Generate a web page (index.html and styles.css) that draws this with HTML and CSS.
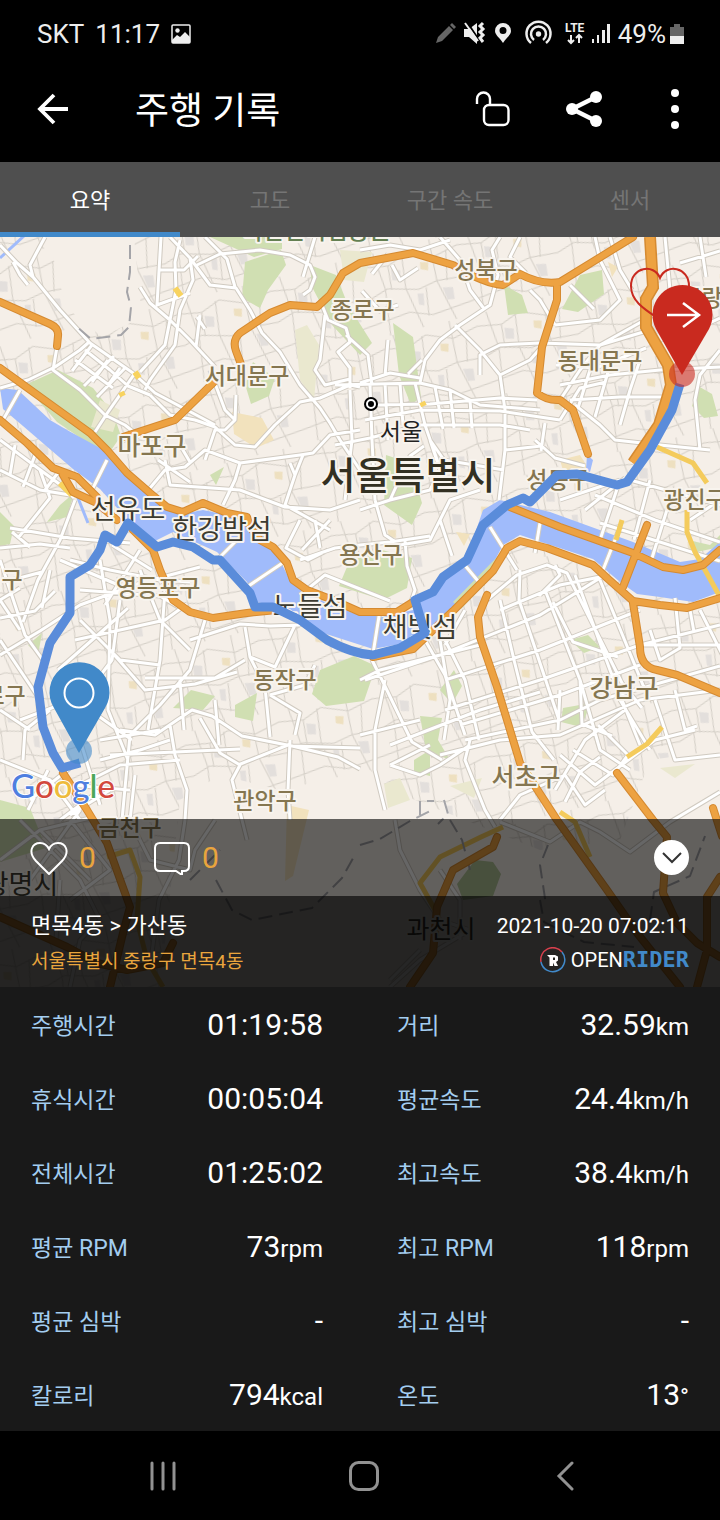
FILE: index.html
```html
<!DOCTYPE html>
<html lang="ko">
  <head>
    <meta charset="UTF-8">
    <meta name="viewport" content="width=device-width, initial-scale=1.0">
    <title>주행 기록</title>
    <link rel="stylesheet" href="styles.css">
  </head>
  <body>
    <div class="status">
      <span>SKT</span>
      <span>11:17</span>
      <svg class="status__photo" width="20" height="20" viewBox="0 0 20 20" aria-hidden="true">
        <rect x="1" y="1" width="18" height="18" rx="1" fill="none" stroke="#eee" stroke-width="1.5"/>
        <circle cx="6.500" cy="6.500" r="2.200" fill="#eee"/>
        <path d="M1 16l5-5 3 2 5-5 5 5v6H1z" fill="#eee"/>
      </svg>
      <div class="status__side">
        <svg width="176" height="32" viewBox="434 18 176 32" aria-hidden="true">
          <path d="M435 43l2-6 11-11 4 4-11 11zM449 25l2-2 4 4-2 2z" fill="#666"/>
          <g fill="#eee">
            <path d="M463 29h5l8-6v21l-8-7h-5z"/>
            <path d="M466 22l12 18" stroke="#000" stroke-width="2"/>
            <path d="M464 23l13 18" stroke="#eee" stroke-width="2"/>
            <path d="M482 23l-3 3 3 3-3 3 3 3-3 3 3 4" fill="none" stroke="#eee" stroke-width="3"/>
            <path fill-rule="evenodd" d="M502 43c-3-5-8-8-8-12a8 8 0 0 1 16 0c0 4-5 7-8 12zM502 27a3.500 3.500 0 1 0 0 7 3.500 3.500 0 0 0 0-7z"/>
            <circle cx="537.500" cy="34" r="2.700"/>
            <path d="M530 43a12 12 0 1 1 15 0M533 40a7.500 7.500 0 1 1 9 0" fill="none" stroke="#eee" stroke-width="2.500"/>
            <path d="M570 35v8M567 40l3 3 3-3M578 43v-8M575 38l3-3 3 3" fill="none" stroke="#eee" stroke-width="2"/>
            <path d="M591 39h2v4h-2zM596 35h2v8h-2zM601 30h3v13h-3zM606 24h3v19h-3z"/>
          </g>
          <text class="status__lte" x="564" y="32">LTE</text>
        </svg>
        <span class="status__battery">49%</span>
        <svg width="14" height="20" viewBox="0 0 14 20" aria-hidden="true">
          <path d="M0 12V3h4V0h6v3h4v9z" fill="#666"/>
          <path d="M0 12h14v8H0z" fill="#eee"/>
        </svg>
      </div>
    </div>

    <header class="toolbar">
      <button class="toolbar__back" type="button" aria-label="뒤로">
        <svg width="32" height="32" viewBox="0 0 32 32"><path d="M31 16H3M17 2L3 16l14 14" stroke-width="3.800"/></svg>
      </button>
      <h1 class="toolbar__title">주행 기록</h1>
      <button class="toolbar__action" type="button" aria-label="잠금 해제">
        <svg width="36" height="36" viewBox="0 0 36 36">
          <rect x="9" y="14" width="24.500" height="20" rx="5" stroke-width="2.400"/>
          <path d="M2 13V8a6.500 6.500 0 0 1 13 0v6" stroke-width="2.400"/>
        </svg>
      </button>
      <button class="toolbar__action" type="button" aria-label="공유">
        <svg width="36" height="36" viewBox="0 0 36 36">
          <path d="M30 6L6 18l24 12" stroke-width="4.500"/>
          <g fill="#fff" stroke="none"><circle cx="30" cy="6" r="6"/><circle cx="6" cy="18" r="6"/><circle cx="30" cy="30" r="6"/></g>
        </svg>
      </button>
      <button class="toolbar__action" type="button" aria-label="더보기">
        <svg width="8" height="40" viewBox="0 0 8 40"><g fill="#fff" stroke="none"><circle cx="4" cy="4" r="4"/><circle cx="4" cy="20" r="4"/><circle cx="4" cy="36" r="4"/></g></svg>
      </button>
    </header>

    <nav class="tabs" aria-label="기록 보기">
      <button class="tabs__tab tabs__tab--active" type="button">요약</button>
      <button class="tabs__tab" type="button">고도</button>
      <button class="tabs__tab" type="button">구간 속도</button>
      <button class="tabs__tab" type="button">센서</button>
    </nav>

    <main>
      <section class="ride" aria-label="주행 경로">
        <svg class="map" viewBox="0 237 720 750" role="img" aria-label="서울 지도">
          <defs>
            <pattern id="streets" width="96" height="84" patternUnits="userSpaceOnUse" patternTransform="rotate(-14)">
              <path class="map__street" d="M0 12l24 4 20-8 26 10 26-6M0 44l18-6 30 8 20-4 28 2M0 70l34-4 22 8 40-4M12 0l4 38-6 46M40 8l-4 34 8 42M70 0l-2 42 10 42M84 14l-6 30M24 16l-2 24M56 46l-4 28"/>
              <path fill="#e3dfdc" d="M26 20l9 3-2 10-8-2zM72 50l10 2-1 12-7-1zM46 50l6 1-2 12-5-2z"/>
              <path fill="#eee0c0" d="M56 20l8 2-2 8-7-3z"/>
            </pattern>
            <path id="roads" d="M0 245l17 18 16 14 27 33 30 33 43 30 22 20 45 24 15 8M45 237l-7 13-8 15 3 12M13 262l7 13 8 10M161 237l-4 68 33-12M140 287l10 16 20 17 20 20 25 27M170 237l20 21 20 27 26 3 14 22 12 23 18 19 20 33 20 23 10 15 10 17 20 30
              M197 265l23-11 40-4 30 5 20 10 5 12-5 13-7 5M190 258l3 22-13 30-5 35-25 35-5 10M180 240l-5 22 1 28-6 30-5 25-25 27M0 388l28-8 27-13 25-17 8-7M57 347l-4 23 27 20 25 25 20 10 15 12M20 390L3 420M135 373l-13 19-14 20-13 20M107 460l-15 30M150 395l-22-9-18-16-25-20
              M150 395l20 20 25 5 20 7 20 18 20 2 20-22 25-23 20-4 30-13 10 2M236 395l-1 25-10 10h-10l-5 15-5 15M210 370l15 40 10 10M150 488l15-18 20-3 20-17 35 13 60-8 13-2 17-18 30-5M165 460l5 25 70 5 45 17 45 3 30-10M240 463l-5 17-12 25M290 463l5 12-10 30 45 25M303 455l-8 20M158 460l32 22M180 445l10 17
              M75 360l38 28M92 345l-20 26M108 360l-16 22M120 368l-14 20M84 386l30-30M97 397l29-30M205 237l22 22 8 28M160 270h24l14-14M315 237l-12 40M200 315l-4 32M197 317l8 12
              M320 300l8 20 18 8 4 14-12 10 12 16v20M325 315l-5 45-5 10 10 15 25-6M335 385l85-2 30 7 30 15 60 5M370 405l60-1 70-6 37 2M365 420l55-10 80 1 60 9M335 445l35-7 50-13h80l30 5M370 385l2 55 3 60M385 383l3 57M400 383l3 42M415 383l10 42 16 46M350 390l2 50-7 60M435 387l8 42M450 390l4 38M470 400l2 28
              M420 383l5-23 15-20 20-15 30-20 8-30-6-25 8-13M360 383l30-10 30 5M480 375v-20l20-10 40-2 60 2 50-15M455 325l25 25 20 25 5 35v40l-6 50M530 290l10 10 15 25M555 325l45-5 20-20-20-40-5-23M500 375l30-15 15-17M560 400l20-30 20-25M560 385l50-10 50-5 60-3M570 400l50-3h50M575 405l25 20 15 15 45 5 50 5M620 425l10-35 10-30M720 350l-20 25-5 25 5 50M665 237l5 53M440 237l20 23 10 30 15 20M360 250l30-5 30 5 30-10
              M520 237l-10 20 16 16M570 285l24 24M610 237l10 33 12 20M600 345l50-28 40-26M556 365l40 3 50-20M535 440l20 18 30 8M505 450l36-4M545 423l-4 28M430 440l14 20 60 10M590 370l-12 38M610 365l-15 52M560 420l20-32 26-6M700 237l6 40M680 263l40-12M720 318l-30 14
              M388 254l-16 20M392 265l8 15 18-12M362 291l18 20 18-6M388 340l-3 36M422 360l-14 14M346 335l22 20 4 30
              M360 510l30-10 40-10 10-20-10-30M375 500l10 35 15 10 30-5 20-40 30-10M360 545l30-3 40-6M300 560l35-12 25-3M300 595l25-20 35 14 30 12M405 540l2 26 8 24-4 12M440 520l12 36M300 520l-14 28 22 12 20-10M330 520l-28 30M315 520l5 28M390 500l20-44 14-10
              M490 527l27 43M463 563l20 24M540 523l-5 30M620 527l-17 43M380 610l-8 50M240 537l-23 23M287 560l-40 27M600 523l120 38M630 480l90 25M560 500l60-20M620 480l-20 60M650 480l-16 60M670 500l-18 58M595 495l60 25 65 22M690 520l30-20M585 510l40-32
              M0 440l35 26 27 20 12 12M0 470l40 20 30 5M15 445l-5 30M35 455l-12 32M0 548l40-4 30 4M30 547l-18-15M0 600l20-12M40 470l10 28-32 40M60 470l-15 20M75 500l-15 40-22 40-15 42M0 618l35-7 20-20M0 655l40-24 40-26 60-22 60-16M0 560l25 75 20 28M10 528l60 10 60 5M70 560l40 10 50 10 30 2M80 590l80 6 20 12M100 560l10 60-2 90 20 50M120 600l-8 60-30 40M165 590l-5 70-12 70M60 560l70 30M50 570l-8 38M75 640l90-20 22-16M58 670l50-44 20-18M140 570l20 50 30 30M112 545l40 25M140 550l-35 55
              M190 640l50-16 30 2 30-1M205 620l-15 50-30 35-30 30M295 625l-20 42-25-10-5-30M110 650l35 40 50-6 42-12M245 660l-30 18h-70M250 657l15 30 5 50M80 620l40 40 40 5M270 695l35-10 10-20M270 695l30 18-5 22M120 730l35 5 22-15 15-10 20 6 30 20 50 10 68 2M170 740l-30 10-40 10M170 725l5 30 12 35-2 30M200 718l20 35 20 12-8 15 15 60M215 700l4 45M130 735l-8 85M135 775l-5 45M180 760l-60 5-40 20M90 710l42 30M290 740l-2 50 2 30M238 765l50-20 50 12 22 12M100 740l60-10M110 755l130-6M180 680l4 50
              M0 760l50 20 30 40M50 710l-25 20-2 30M30 800l50-40M48 770l-20 40M0 640l40 60M70 785l60 5M60 820l40-30M80 740l20 65M20 720l42-16M60 710l20 40M0 710l30 20M110 790l-40 25M0 600l20 30M12 580l30-8
              M372 660l10 20 30 62 30 18M360 680l20-10 100-25M385 680l-10 50v40l10 40M360 735l60-15M390 765l40-20M390 765l30 10 20-10 30-20M390 745l90-35 60-18M440 640l10 60-6 40M425 640l20 35 20 60M445 640l20 40 14 60M465 610l-20 35M470 740l-5 20 20 50 10 17M500 600l14 60 18 72 22 28
              M365 680l75-25 100-40 65-40M445 680l95-30 100-40M445 710l95-30 100-35 80-20M460 725l100-30 80-30M465 740l95-20 40-20 120-34M440 755l60-15 60-5 80-35 80-10M487 600l30-25 30-10 20 8 25 50 30 60 20 25M520 570l-1 30 40 120M545 590l35 90 20 70 30 20M575 575l35 95 30 75M600 580l45 110M555 565l5 10-20 20M500 610l60-25 40-8M553 602l20 40 45 15M560 690l-2 40M580 680l2 44 30 12M560 755l35 30 20-15 40-30 40-10M555 790l30-50 40-30M573 750l40 25 15-20-30-30M640 645h80M650 630l10 30 20-12-5-50M700 610l30 60M690 610l4 22M600 757l-20 15-15 30M500 820l20-25 45-20 20 30 20-15M655 700l20 60 45-5M675 690l10 40 12-4M620 700l30 50
              M0 860l40-30 50-12M20 820l60 60 20 40M70 820l40 50-40 30M60 880l-4 60M40 830l50 50M80 810l-50 70M130 820l20 40 40 10 5-20 20-30M100 920l-20 20-10 47M185 820l-6 40-20 40-8 60M395 820l5 30 20 40 20 30 30 10M500 822l50 20 30-20 20 10 30 20 40-30 50-30M440 870l20 30v40M470 930l-50 30-30 27M420 950l-30 30"/>
            <path id="highways" d="M0 302l50 22q9 4 8 12l-1 10M633 237l-73 45q-20 3-40-8l-17 11q-18-1-50-20l-40-12-53 10-17 10-13 22-13 12-27-2-20 8-30 20q-8 7-4 18l6 16M213 383l-38 37-52 17M557 283v17l-15 47-5 46q10 8 23 7l13 10 15 44
              M0 368l90 65 17 17 20 23 23 20 17 14 16 5 20-9 24 10 20 4 3 10 10 13 13 7 14 16 6 17 14 10 26 10 27 12h37l16-10M510 507l50 20 73 26 30 14 20 3 20-5 17-15M0 420l27 23 26 25 24 9 20 20M63 475l10 17 24 11 20 17M133 530l20 20 7 20 13 30 17 12 23 6 34-5 30-3M373 657l40-8 40-38 40-40 14-23 13-7 27 7 46 17 14 13 26 23 27 4 27 3 33-10M633 603l7 44q0 20 17 23l20 5 43 18M647 525l-24 62
              M487 595l-9 22 2 20 17 50 23 76 37 57 50 70 30 43 43 54M617 773l36 47 14 17-4 56 14 30 20 20 23 14M713 808l9 28M720 877l-13 20v53l-10 37M63 773l24 37 20 33 23 64-7 26-13 54M0 917l67 30 30 16 30 7 36-7 10-20M497 837l-4 10-40 23-16 37-4 46-23 34"/>
          </defs>

          <rect x="0" y="237" width="720" height="750" fill="#f5efe8"/>
          <rect x="0" y="237" width="720" height="750" fill="url(#streets)"/>
          <path fill="#f5efe8" d="M48 237h86l8 80-40 20-36-30zM180 800l40-25 60 15 90-20 20 20 100 40 50 20 80-10 30-80 70-10v240H160z"/>

          <g fill="#d0dfb2">
            <path d="M25 385l33-15 35 18 20 25 8 23-14 20-50-34zM245 262l36-12 5 15-18 25-8 18-18-10zM210 237h72v12l-28 8zM253 362l22 16-6 18-18 8-6-20zM310 265l26 10 12 30 24 38-12 12-28-30-20-38zM393 323l20 14 8 60-10 8-12-30zM504 285l18 10 6 18-20 2zM580 275l22-5 2 24-26 18-16-3zM352 555l30-5 30 8-5 30-24 12-44-14zM386 455l24 8 12 40-10 22-28-20zM320 670l34-14 22 10-12 35-38 5-14-12zM173 708l18-18 24 6-12 14zM235 705l22-12-4 28-18-4zM420 716l22 2-4 22 12 20-24-10zM440 690l14-20 8 16-10 18zM570 640l18-5 12 12-16 6zM563 708l28-5-10 24-20-5zM414 760l16-10v26l-16-4zM60 505l14-12-7 24-20 5zM0 512l14 14-4 18-10 2zM0 800l30 8 16 40-46 14zM698 386l14 8 6 22-14 2-12-12zM28 645l14-12-4 22zM688 540l22 5 10-10v12l-28 6zM210 475l14-8-8 18z"/>
            <path fill="#b4c79a" d="M475 860l18 2 8 12-8 22-30 4-6-16z"/>
          </g>
          <g fill="#eae8cf">
            <path d="M295 330l12-5 12 20-5 55-14-20zM340 250l32 2-8 30-20-2zM100 400l20 10-7 22-22-5zM450 786l32-8-8 20zM660 768l35-4-20 14zM384 784l16-6 10 22-22 8z"/>
            <path fill="#f2e2bd" d="M232 412l30 6 12 22-18 8-22-14zM287 805l22 5-16 66-8 5zM560 460l20-5 10 16-24 10zM608 262l10 5-6 10zM456 532l14 2-6 12z"/>
          </g>
          <path fill="#a0bbfb" d="M0 388l18 2 32 30 17 10 33 18 43 39 24 23 20 3 16-3 47 10 23 27 17 33 30 20 33 13 30 4 30-7 33-35 20-15 17-50 17-10 50 12 83 30 47 20 20-3 20-17v50l-27 10-33-5-23-3-17-12-27-23-73-24-17 10-16 30-27 24-27 26-33 19-27 5-53-17-30-23-33-7-10-20-30-30-44-20-20 10-26-23-27-30-27-20-50-43-20-17zM587 455l6 5-3 12-4-2z"/>
          <path d="M0 258l24-22M76 493l12 30" fill="none" stroke="#a0bbfb" stroke-width="3"/>
          <path fill="#d0dfb2" d="M453 602l46-47 8-9-20 36-26 27zM638 600l45 8 37-11-34 8z"/>

          <use class="map__road map__road--edge" href="#roads"/>
          <use class="map__road" href="#roads"/>
          <path class="map__main" d="M657 447l36 16 14 20M687 510v22l8 20 25 45M622 520l-6 20M662 727l-15 17-20 13M560 812l15 10 15 35M503 827l-22 10-41 20-20 26 15 27M107 857l23-7 10 27-3 43 10 40 16 27"/>
          <path d="M60 483l12 12M175 288l6 8M135 372l4 6M121 392l2 4M422 402l2 4" stroke="#f8d35f" stroke-width="6"/>
          <path class="map__border" d="M130 245v27l-3 20 4 15-2 20-8 8-30 4-14-12M420 815v-14h14M444 800l4 14-10 10M190 880l30-30M216 880l16 30 20 10 60-12 30-30 14-25M360 845l20-6 30-18 20-10M450 820l12 20 8 30M548 845l-8 20 6 40M540 900l4 22 40 20 50 5M650 920l4-28 36-16 15-40"/>
          <use class="map__highway map__highway--edge" href="#highways"/>
          <use class="map__highway" href="#highways"/>
          <path d="M650 237l3 50-7 12v28l22 38 3 20-12 40-26 38" fill="none" stroke="#d58a31" stroke-width="12"/>
          <path d="M650 237l3 50-7 12v28l22 38 3 20-12 40-26 38" fill="none" stroke="#eda242" stroke-width="9"/>

          <g class="map__label">
            <text class="map__label--park" x="316" y="239">북한산국립공원</text>
            <text x="486" y="278">성북구</text>
            <text x="363" y="318">종로구</text>
            <text x="247" y="384">서대문구</text>
            <text x="600" y="369">동대문구</text>
            <text x="712" y="306">중랑구</text>
            <text x="558" y="488">성동구</text>
            <text x="695" y="508">광진구</text>
            <text x="371" y="563">용산구</text>
            <text x="158" y="596">영등포구</text>
            <text x="-9" y="588">양천구</text>
            <text x="-6" y="704">구로구</text>
            <text x="285" y="688">동작구</text>
            <text x="265" y="809">관악구</text>
            <text x="130" y="836">금천구</text>
            <g class="map__label--large">
              <text x="152" y="455">마포구</text>
              <text x="526" y="786">서초구</text>
              <text x="624" y="697">강남구</text>
            </g>
            <g class="map__label--place">
              <text x="128" y="519">선유도</text>
              <text x="222" y="539">한강밤섬</text>
              <text x="310" y="616">노들섬</text>
              <text x="420" y="637">채빛섬</text>
              <text x="21" y="894">광명시</text>
              <text class="map__label--large" x="441" y="938">과천시</text>
            </g>
            <text class="map__label--seoul" x="401" y="440">서울</text>
            <text class="map__label--city" x="408" y="489">서울특별시</text>
          </g>
          <circle cx="371" cy="404" r="7" fill="#000"/>
          <circle cx="371" cy="404" r="4" fill="none" stroke="#fff" stroke-width="2"/>

          <path class="map__route" d="M680 384l-8 26-22 40-23 32-10 3-40-11-20 1-27 27-7-4-16 7-24 20-16 35-24 17-10 15-18 8 10 33-25 15-27 7q-20-1-46-15l-27-20-27-13h-18l-5-14-30-33h-7l-20-13-20-5-16 5-29-24-11 19-12-7-5 15-10 15-20 12v36l-20 30-12 44 5 40 10 26 9 15 18-5"/>

          <path d="M659 319c-15-10-28-18-28-33 0-19 23-23 29-8 6-15 29-11 29 8" fill="none" stroke="#c92a1f" stroke-width="2"/>
          <circle cx="682" cy="374" r="13" fill="#c92a1f" opacity=".6"/>
          <path d="M682 375l-26-46a30 30 0 1 1 53 0z" fill="#c92a1f"/>
          <path d="M667 315h31M683 303l16 12-16 12" fill="none" stroke="#fff" stroke-width="2.500"/>

          <circle cx="79" cy="751" r="13" fill="#4189c9" opacity=".6"/>
          <path d="M79 753l-25-45a30 30 0 1 1 51 0z" fill="#4189c9"/>
          <circle cx="79" cy="693" r="14.500" fill="none" stroke="#fff" stroke-width="2"/>

          <text class="map__google" x="11" y="798"><tspan fill="#4f7fe0">G</tspan><tspan fill="#d3493d">o</tspan><tspan fill="#eebb3c">o</tspan><tspan fill="#4f7fe0">g</tspan><tspan fill="#4ca75a">l</tspan><tspan fill="#d3493d">e</tspan></text>
        </svg>

        <div class="overlay">
          <div class="social">
            <button class="social__item" type="button" aria-label="좋아요">
              <svg width="38" height="34" viewBox="0 0 38 34"><path d="M19 33L6 20C-3 10 3 2 10 2q6 0 9 6 3-6 9-6c7 0 13 8 4 18z"/></svg>
              <span>0</span>
            </button>
            <button class="social__item" type="button" aria-label="댓글">
              <svg width="38" height="34" viewBox="0 0 38 34"><path d="M7 2h24q5 0 5 5v18q0 5-5 5h-2v4l-6-4H7q-5 0-5-5V7q0-5 5-5z"/></svg>
              <span>0</span>
            </button>
            <button class="social__toggle" type="button" aria-label="접기">
              <svg width="20" height="12" viewBox="0 0 20 12"><path d="M1 1l9 9 9-9"/></svg>
            </button>
          </div>
          <div class="info">
            <div>
              <h2 class="info__name">면목4동 &gt; 가산동</h2>
              <p class="info__address">서울특별시 중랑구 면목4동</p>
            </div>
            <div class="info__side">
              <time class="info__date" datetime="2021-10-20T07:02:11">2021-10-20 07:02:11</time>
              <p class="brand">
                <svg width="26" height="26" viewBox="0 0 26 26" aria-hidden="true">
                  <path d="M1 15A12 12 0 0 1 22 5" fill="none" stroke="#d8404d" stroke-width="1.500"/>
                  <path d="M22 5A12 12 0 1 1 1 15" fill="none" stroke="#4189c9" stroke-width="1.500"/>
                  <path d="M7 8h8l3 1.500v4L16 15l2 4h-3.500L13 15.500V19H9.500v-8.500z" fill="#fff"/>
                  <path d="M13 10.500h2v2.500h-2z" fill="#252321"/>
                </svg>
                <span>OPEN<b class="brand__bold">RIDER</b></span>
              </p>
            </div>
          </div>
        </div>
      </section>

      <dl class="stats">
        <div class="stats__item"><dt>주행시간</dt><dd>01:19:58</dd></div>
        <div class="stats__item"><dt>거리</dt><dd>32.59<small>km</small></dd></div>
        <div class="stats__item"><dt>휴식시간</dt><dd>00:05:04</dd></div>
        <div class="stats__item"><dt>평균속도</dt><dd>24.4<small>km/h</small></dd></div>
        <div class="stats__item"><dt>전체시간</dt><dd>01:25:02</dd></div>
        <div class="stats__item"><dt>최고속도</dt><dd>38.4<small>km/h</small></dd></div>
        <div class="stats__item"><dt>평균 RPM</dt><dd>73<small>rpm</small></dd></div>
        <div class="stats__item"><dt>최고 RPM</dt><dd>118<small>rpm</small></dd></div>
        <div class="stats__item"><dt>평균 심박</dt><dd>-</dd></div>
        <div class="stats__item"><dt>최고 심박</dt><dd>-</dd></div>
        <div class="stats__item"><dt>칼로리</dt><dd>794<small>kcal</small></dd></div>
        <div class="stats__item"><dt>온도</dt><dd>13<small>°</small></dd></div>
      </dl>
    </main>

    <nav class="system" aria-label="시스템">
      <button type="button" aria-label="최근 앱">
        <svg width="28" height="30" viewBox="0 0 28 30"><path d="M3 2v26M14 2v26M25 2v26"/></svg>
      </button>
      <button type="button" aria-label="홈">
        <svg width="32" height="32" viewBox="0 0 32 32"><rect x="2.500" y="2.500" width="27" height="27" rx="8"/></svg>
      </button>
      <button type="button" aria-label="이전">
        <svg width="20" height="30" viewBox="0 0 20 30"><path d="M17 2L4 15l13 13"/></svg>
      </button>
    </nav>
  </body>
</html>
```
FILE: styles.css
```css
:root {
  --black: #000;
  --panel: #191919;
  --tab: #4f4f4f;
  --blue: #4189c9;
  --light-blue: #a3cdf0;
  --orange: #e9a53d;
  --font: Roboto, "Noto Sans CJK KR", sans-serif;
}

*, *::before, *::after {
  box-sizing: border-box;
}

body {
  margin: 0;
  background-color: var(--black);
  font-family: var(--font);
  color: #fff;
}

h1, h2, p, dl, dd {
  margin: 0;
  font-weight: 400;
}

button {
  padding: 0;
  background: none;
  border: 0;
  font: inherit;
  color: inherit;
  cursor: pointer;
}

svg {
  display: block;
}

/* Phone status bar */
.status {
  display: flex;
  align-items: center;
  gap: 11px;
  height: 68px;
  padding: 0 36px 0 37px;
  font-size: 26px;
  color: #eee;
}
.status__side {
  display: flex;
  align-items: center;
  margin-left: auto;
}
.status__lte {
  font: 700 12px var(--font);
  fill: #eee;
}
.status__battery {
  margin: 0 4px 0 7px;
}

/* App toolbar */
.toolbar {
  display: flex;
  align-items: center;
  height: 94px;
  padding-bottom: 12px;
}
.toolbar svg {
  margin: 0 auto;
  fill: none;
  stroke: #fff;
}
.toolbar__back {
  width: 106px;
  height: 82px;
}
.toolbar__title {
  flex: 1;
  padding: 6px 0 0 29px;
  font-size: 37px;
  line-height: 52px;
}
.toolbar__action {
  width: 91px;
  height: 82px;
}

.tabs {
  display: grid;
  grid-template-columns: repeat(4, 1fr);
  background-color: var(--tab);
}
.tabs__tab {
  height: 75px;
  padding-top: 2px;
  border-bottom: 5px solid transparent;
  font-size: 22px;
  color: #757575;
}
.tabs__tab--active {
  border-color: var(--blue);
  color: #fff;
}

/* The map and the panels that lie over its bottom edge share one cell */
.ride {
  display: grid;
}
.map,
.overlay {
  grid-area: 1 / 1;
}
.map {
  width: 100%;
  height: auto;
}
.map__street {
  fill: none;
  stroke: #d3cec6;
  stroke-width: 1px;
}
.map__road,
.map__highway,
.map__main,
.map__border,
.map__route {
  fill: none;
  stroke-linejoin: round;
}
.map__road {
  stroke: #fff;
  stroke-width: 3px;
}
.map__road--edge {
  stroke: #d0cac0;
  stroke-width: 5px;
}
.map__main {
  stroke: #f4cb5c;
  stroke-width: 5px;
}
.map__border {
  stroke: #a4a4a8;
  stroke-width: 2px;
  stroke-dasharray: 14 7;
}
.map__highway {
  stroke: #eda242;
  stroke-width: 6px;
  stroke-linecap: round;
}
.map__highway--edge {
  stroke: #d58a31;
  stroke-width: 8px;
}
.map__route {
  stroke: #5a8cda;
  stroke-width: 9px;
}

.map__label {
  font: 500 23px "Noto Sans CJK KR", sans-serif;
  fill: #857650;
  stroke: #f8f4ee;
  stroke-width: 4px;
  stroke-linejoin: round;
  paint-order: stroke;
  text-anchor: middle;
}
.map__label--park {
  fill: #648052;
}
.map__label--place {
  font-size: 27px;
  font-weight: 400;
  fill: #3c3b30;
}
.map__label--large {
  font-size: 25px;
}
.map__label--seoul {
  font-weight: 400;
  fill: #222;
}
.map__label--city {
  font-size: 38px;
  fill: #333022;
}
.map__google {
  font: 500 33px Lato, sans-serif;
  stroke: #fff;
  stroke-width: 2px;
  paint-order: stroke;
}

.overlay {
  align-self: end;
}
.social {
  display: flex;
  align-items: center;
  gap: 57px;
  height: 77px;
  padding: 0 31px 0 30px;
  background-color: rgba(0, 0, 0, .6);
}
.social__item {
  display: flex;
  align-items: center;
  gap: 11px;
  font-size: 30px;
  color: var(--orange);
}
.social__item svg {
  fill: none;
  stroke: #fff;
  stroke-width: 2px;
}
.social__toggle {
  display: grid;
  place-items: center;
  width: 35px;
  height: 35px;
  margin-left: auto;
  background-color: #fff;
  border-radius: 50%;
}
.social__toggle svg {
  fill: none;
  stroke: #333;
  stroke-width: 2px;
}

.info {
  display: flex;
  justify-content: space-between;
  height: 91px;
  padding: 12px 31px 0;
  background-color: rgba(0, 0, 0, .85);
}
.info__name {
  font-size: 22px;
  line-height: 36px;
}
.info__address {
  font-size: 19px;
  line-height: 36px;
  color: var(--orange);
}
.info__side {
  text-align: right;
}
.info__date {
  font-size: 21px;
  line-height: 36px;
}
.brand {
  display: flex;
  align-items: center;
  justify-content: flex-end;
  gap: 5px;
  font-size: 20px;
  line-height: 32px;
}
.brand__bold {
  font: 700 22px "DejaVu Sans Mono", monospace;
  color: var(--blue);
}

/* Ride numbers */
.stats {
  display: grid;
  grid-template-columns: 1fr 1fr;
  column-gap: 74px;
  padding: 0 31px;
  background-color: var(--panel);
}
.stats__item {
  display: flex;
  align-items: center;
  justify-content: space-between;
  height: 74px;
}
.stats dt {
  font-size: 23px;
  color: var(--light-blue);
}
.stats dd {
  font-size: 30px;
}
.stats small {
  font-size: 24px;
}

/* Phone navigation buttons */
.system {
  display: grid;
  grid-template-columns: repeat(3, 1fr);
  height: 89px;
  padding: 0 54px 0 62px;
}
.system svg {
  margin: 0 auto;
  fill: none;
  stroke: #929292;
  stroke-width: 3px;
  stroke-linecap: round;
}
```
